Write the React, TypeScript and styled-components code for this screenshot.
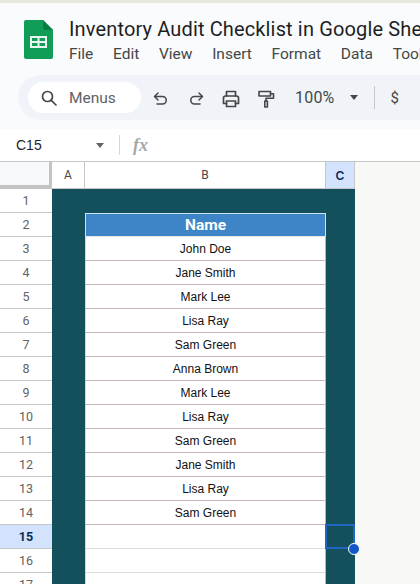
import React from "react";
import styled, { createGlobalStyle } from "styled-components";

const Global = createGlobalStyle`
  html, body { margin: 0; padding: 0; background: #f9fbfd; }
  #root { width: 420px; height: 584px; overflow: hidden; }
  * { box-sizing: border-box; }
`;

const Page = styled.div`
  width: 420px;
  height: 584px;
  overflow: hidden;
  display: flex;
  flex-direction: column;
  font-family: "Roboto", "Liberation Sans", sans-serif;
  border-top: 3px solid #e6e8e0;
  background: #f9fbfd;
`;

const Header = styled.header`
  height: 67px;
  flex: none;
  display: flex;
  padding: 14px 0 0 24px;
  gap: 16px;
  overflow: hidden;
`;

const Logo = styled.svg`
  width: 29px;
  height: 39px;
  flex: none;
  margin-top: 3px;
`;

const TitleBlock = styled.div`
  display: flex;
  flex-direction: column;
  white-space: nowrap;
`;

const Title = styled.div`
  font-size: 20px;
  line-height: 24px;
  color: #1f1f1f;
  letter-spacing: 0.14px;
`;

const Menu = styled.nav`
  display: flex;
  margin-top: 3px;
  font-size: 15.5px;
  line-height: 20px;
  color: #444746;
  gap: 19.7px;
`;

const ToolbarWrap = styled.div`
  height: 59px;
  flex: none;
  padding: 5px 0 9px 18px;
`;

const Toolbar = styled.div`
  height: 45px;
  width: 500px;
  background: #f0f4f9;
  border-radius: 23px;
  display: flex;
  align-items: center;
  padding-left: 10px;
  color: #444746;
`;

const SearchPill = styled.div`
  width: 113px;
  height: 31px;
  background: #fff;
  border-radius: 16px;
  display: flex;
  align-items: center;
  padding-left: 12px;
  gap: 11px;
  font-size: 15.5px;
  color: #5f6368;
  margin-right: 10px;
`;

const ToolIcon = styled.svg<{ $gap?: number }>`
  width: 20px;
  height: 20px;
  flex: none;
  margin-right: ${(p) => p.$gap ?? 14}px;
  margin-top: 2px;
`;

const Zoom = styled.span`
  font-size: 16px;
  margin-left: 19px;
  letter-spacing: 0.2px;
  color: #444746;
`;

const Caret = styled.span<{ $color?: string; $gap?: number }>`
  width: 0;
  height: 0;
  flex: none;
  border-left: 4.5px solid transparent;
  border-right: 4.5px solid transparent;
  border-top: 5px solid ${(p) => p.$color ?? "#444746"};
  margin-left: ${(p) => p.$gap ?? 15}px;
`;

const ToolSep = styled.span`
  width: 1px;
  height: 23px;
  background: #c7c7c7;
  margin: 0 16px 0 16px;
  flex: none;
`;

const Dollar = styled.span`
  font-size: 15px;
  color: #444746;
`;

const FormulaBar = styled.div`
  height: 33px;
  flex: none;
  background: #fff;
  border-bottom: 1px solid #c4c7c5;
  display: flex;
  align-items: center;
`;

const NameBox = styled.div`
  width: 119px;
  display: flex;
  align-items: center;
  justify-content: space-between;
  padding: 0 15px 0 16px;
  font-size: 14px;
  font-family: "Liberation Sans", sans-serif;
  color: #1f1f1f;
`;

const FxSep = styled.span`
  width: 1px;
  height: 20px;
  background: #d5d7d6;
`;

const Fx = styled.span`
  margin-left: 13px;
  font-family: "Liberation Serif", serif;
  font-style: italic;
  font-weight: 700;
  font-size: 18px;
  color: #a6a8a8;
`;

const Sheet = styled.div`
  flex: 1;
  display: flex;
  flex-direction: column;
  min-height: 0;
  background: #f8f9f7;
`;

const Grid = styled.div`
  display: grid;
  grid-template-columns: 52px 33px 241px 29px;
  grid-auto-rows: 24px;
  width: 355px;
`;

const Corner = styled.div`
  height: 27px;
  background: #f8f9fa;
  border-right: 3px solid #c4c4c4;
  border-bottom: 4px solid #c4c4c4;
`;

const ColHead = styled.div<{ $active?: boolean }>`
  height: 27px;
  display: flex;
  align-items: center;
  justify-content: center;
  font-size: 12px;
  font-family: ${(p) => (p.$active ? '"Inter", sans-serif' : '"Roboto", sans-serif')};
  font-weight: ${(p) => (p.$active ? 600 : 400)};
  background: ${(p) => (p.$active ? "#d3e3fd" : "#fff")};
  color: ${(p) => (p.$active ? "#0b2a55" : "#444746")};
  border-right: 1px solid #c7c7c7;
  border-bottom: 1px solid #c7c7c7;
`;

const HeadRow = styled.div`
  display: grid;
  grid-template-columns: 52px 33px 241px 29px;
  width: 355px;
  height: 27px;
  flex: none;
`;

const RowHead = styled.div<{ $active?: boolean }>`
  display: flex;
  align-items: center;
  justify-content: center;
  font-size: 12.5px;
  font-weight: ${(p) => (p.$active ? 700 : 400)};
  background: ${(p) => (p.$active ? "#d3e3fd" : "#fff")};
  color: ${(p) => (p.$active ? "#0b2a55" : "#5f6368")};
  border-bottom: 1px solid #c7c7c7;
`;

const Teal = styled.div<{ $wide?: boolean }>`
  background: #14505c;
  position: relative;
  grid-column: ${(p) => (p.$wide ? "span 3" : "auto")};
`;

const NameHeader = styled.div`
  background: #3d85c6;
  color: #fff;
  font-weight: 700;
  font-size: 15.5px;
  display: flex;
  align-items: center;
  justify-content: center;
  border: 1px solid #cfe2f3;
  border-bottom-color: #e4e6e8;
`;

const NameCell = styled.div<{ $plain?: boolean }>`
  background: #fff;
  color: #111;
  font-family: "Liberation Sans", sans-serif;
  font-size: 12px;
  display: flex;
  align-items: center;
  justify-content: center;
  border-left: 1px solid #cfd8dc;
  border-right: 1px solid #b9b4b8;
  border-bottom: 1px solid ${(p) => (p.$plain ? "#dcdcdc" : "#c3b4bb")};
`;

const Selection = styled.div`
  position: absolute;
  z-index: 2;
  left: -1px;
  top: -1px;
  width: 30px;
  height: 25px;
  border: 2px solid #1f65c4;
`;

const Handle = styled.div`
  position: absolute;
  right: -7px;
  bottom: -8px;
  width: 12px;
  height: 12px;
  border-radius: 50%;
  background: #1257c9;
  border: 1px solid #fff;
`;

const names = ["John Doe", "Jane Smith", "Mark Lee", "Lisa Ray", "Sam Green", "Anna Brown", "Mark Lee", "Lisa Ray", "Sam Green", "Jane Smith", "Lisa Ray", "Sam Green"];

const stroke = { fill: "none", stroke: "#444746", strokeWidth: 1.5, strokeLinecap: "round" as const, strokeLinejoin: "round" as const };

export default function App() {
  return (
    <Page>
      <Global />
      <Header>
        <Logo viewBox="0 0 29 39">
          <path d="M2 0h17l10 10v27a2 2 0 0 1-2 2H2a2 2 0 0 1-2-2V2a2 2 0 0 1 2-2z" fill="#0f9d58" />
          <path d="M19 0l10 10h-8a2 2 0 0 1-2-2z" fill="#0a7d45" />
          <path d="M6 16h17v12H6z" fill="#e8f5ee" />
          <path d="M8 18h5.5v3H8zM15.5 18H21v3h-5.5zM8 23h5.5v3H8zM15.5 23H21v3h-5.5z" fill="#0f9d58" />
        </Logo>
        <TitleBlock>
          <Title>Inventory Audit Checklist in Google Sheets</Title>
          <Menu>
            <span>File</span>
            <span>Edit</span>
            <span>View</span>
            <span>Insert</span>
            <span>Format</span>
            <span>Data</span>
            <span>Tools</span>
          </Menu>
        </TitleBlock>
      </Header>
      <ToolbarWrap>
        <Toolbar>
          <SearchPill>
            <svg width="18" height="18" viewBox="0 0 18 18" {...stroke} strokeWidth={1.7}>
              <circle cx="7.5" cy="7.5" r="5" />
              <path d="M11.3 11.3 16 16" />
            </svg>
            Menus
          </SearchPill>
          <ToolIcon viewBox="0 0 20 20" {...stroke} $gap={15}>
            <path d="M7 4 3.5 7.5 7 11" />
            <path d="M4 7.5h7.5a3.7 3.7 0 0 1 0 7.5H6" />
          </ToolIcon>
          <ToolIcon viewBox="0 0 20 20" {...stroke} $gap={15}>
            <path d="M13 4l3.5 3.5L13 11" />
            <path d="M16 7.5H8.5a3.7 3.7 0 0 0 0 7.5H14" />
          </ToolIcon>
          <ToolIcon viewBox="0 0 20 20" {...stroke} strokeWidth={1.7} $gap={15}>
            <path d="M5.5 7V2.5h9V7" />
            <path d="M5.5 14.5H2.5V9a2 2 0 0 1 2-2h11a2 2 0 0 1 2 2v5.5h-3" />
            <path d="M5.5 12h9v5.5h-9z" />
          </ToolIcon>
          <ToolIcon viewBox="0 0 20 20" {...stroke} strokeWidth={1.6} $gap={0}>
            <path d="M3 2.5h11.5v4.5H3z" />
            <path d="M14.5 4.8h3v4.5H10V12" />
            <path d="M8.8 12h2.6v6H8.8z" />
          </ToolIcon>
          <Zoom>100%</Zoom>
          <Caret />
          <ToolSep />
          <Dollar>$</Dollar>
        </Toolbar>
      </ToolbarWrap>
      <FormulaBar>
        <NameBox>
          C15
          <Caret $color="#5f6368" $gap={0} />
        </NameBox>
        <FxSep />
        <Fx>fx</Fx>
      </FormulaBar>
      <Sheet>
        <HeadRow>
          <Corner />
          <ColHead>A</ColHead>
          <ColHead>B</ColHead>
          <ColHead $active>C</ColHead>
        </HeadRow>
        <Grid>
          <RowHead>1</RowHead>
          <Teal $wide />
          {Array.from({ length: 16 }, (_, i) => {
            const n = i + 2;
            const name = names[i - 1];
            return (
              <React.Fragment key={n}>
                <RowHead $active={n === 15}>{n}</RowHead>
                <Teal />
                {n === 2 ? (
                  <NameHeader>Name</NameHeader>
                ) : (
                  <NameCell $plain={n > 14}>{name}</NameCell>
                )}
                <Teal>
                  {n === 15 && (
                    <Selection>
                      <Handle />
                    </Selection>
                  )}
                </Teal>
              </React.Fragment>
            );
          })}
        </Grid>
      </Sheet>
    </Page>
  );
}
